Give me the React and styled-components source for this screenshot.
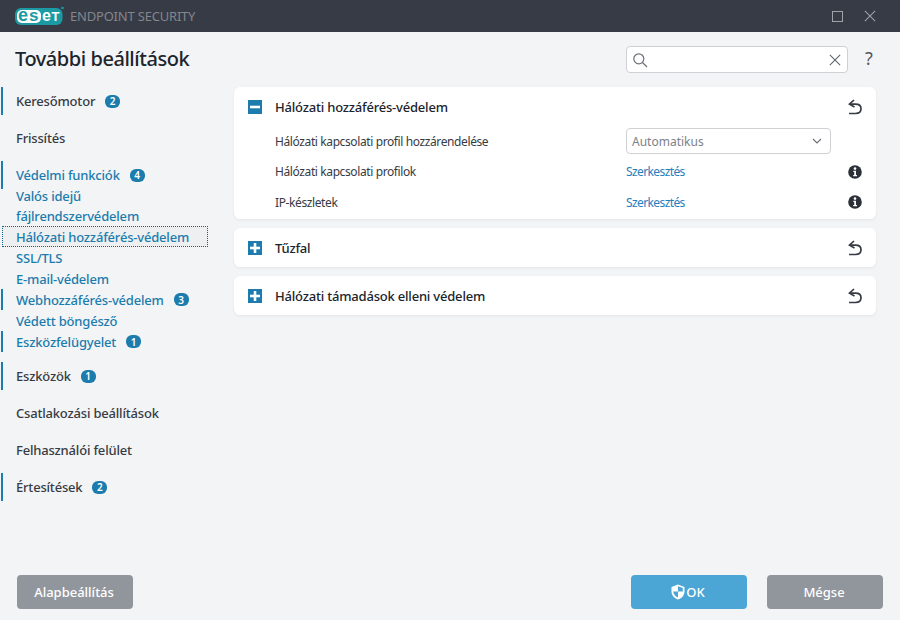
import React from "react";
import styled, { createGlobalStyle } from "styled-components";

const Global = createGlobalStyle`
  html, body { margin: 0; padding: 0; background: #f3f4f6; }
  * { box-sizing: border-box; }
`;

const Page = styled.div`
  display: flex;
  flex-direction: column;
  width: 900px;
  height: 620px;
  overflow: hidden;
  background: #f3f4f6;
  font-family: "Noto Sans", "Open Sans", sans-serif;
  color: #373b44;
`;

const TitleBar = styled.div`
  display: flex;
  align-items: center;
  height: 32px;
  padding-left: 15px;
  background: #373b45;
`;

const Product = styled.span`
  margin-left: 5px;
  font-size: 13px;
  letter-spacing: -0.2px;
  color: #83868e;
`;

const WinButton = styled.button`
  display: flex;
  align-items: center;
  justify-content: center;
  width: 32px;
  height: 32px;
  padding: 0;
  border: 0;
  background: none;
  margin-left: ${(p) => p.$left || 0}px;
`;

const WinControls = styled.div`
  display: flex;
  margin-left: auto;
  margin-right: 14px;
`;

const Header = styled.div`
  display: flex;
  align-items: center;
  height: 55px;
  padding: 0 21px 0 15px;
`;

const Title = styled.h1`
  margin: 0;
  padding-bottom: 2px;
  font-size: 20px;
  font-weight: 500;
  letter-spacing: -0.45px;
  color: #20242c;
`;

const Search = styled.div`
  display: flex;
  align-items: center;
  justify-content: space-between;
  width: 222px;
  height: 27px;
  margin-left: auto;
  padding: 0 6px 0 5px;
  background: #fff;
  border: 1px solid #cfd0d3;
  border-radius: 4px;
`;

const Help = styled.span`
  width: 20px;
  margin-left: 11px;
  padding-bottom: 3px;
  text-align: center;
  font-size: 18px;
  color: #555a63;
`;

const Body = styled.div`
  display: flex;
  flex: 1;
`;

const Sidebar = styled.nav`
  display: flex;
  flex-direction: column;
  width: 234px;
  padding-left: 1px;
  font-size: 13px;
  letter-spacing: -0.19px;
`;

const TopItem = styled.div`
  display: flex;
  align-items: center;
  height: 28px;
  margin-bottom: 9px;
  padding-left: 13px;
  font-weight: 500;
  color: ${(p) => (p.$active ? "#1b7cad" : "#373b44")};
  border-left: 2px solid ${(p) => (p.$bar ? "#1b7cad" : "transparent")};
`;

const SubList = styled.div`
  display: flex;
  flex-direction: column;
  margin-top: -12px;
  margin-bottom: 10px;
`;

const SubItem = styled.div`
  display: flex;
  align-items: center;
  width: 207px;
  min-height: 21px;
  padding-left: 13px;
  font-weight: 500;
  line-height: 20px;
  color: #1b7cad;
  border-left: 2px solid ${(p) => (p.$bar ? "#1b7cad" : "transparent")};
  ${(p) =>
    p.$selected &&
    `
    width: 206px;
    margin-left: 1px;
    padding-left: 12px;
    background: #eeeff1;
    outline: 1px dotted #14608a;
    outline-offset: -1px;
    border-left: 2px solid transparent;
  `}
`;

const Badge = styled.span`
  display: inline-flex;
  align-items: center;
  justify-content: center;
  width: 15px;
  height: 13px;
  margin-left: 10px;
  border-radius: 6px;
  background: #1b7cad;
  color: #fff;
  font-size: 10px;
  font-weight: 600;
  letter-spacing: 0;
`;

const Content = styled.div`
  display: flex;
  flex-direction: column;
  gap: 9px;
  width: 642px;
`;

const Card = styled.section`
  background: #fff;
  border-radius: 6px;
  box-shadow: 0 1px 3px rgba(40, 44, 54, 0.07);
`;

const CardHead = styled.div`
  display: flex;
  align-items: center;
  height: 39px;
  padding: 0 14px;
`;

const CardTitle = styled.span`
  margin-left: 13px;
  font-size: 13px;
  font-weight: 500;
  letter-spacing: -0.2px;
  color: #20242c;
`;

const Toggle = styled.span`
  display: flex;
  align-items: center;
  justify-content: center;
  width: 14px;
  height: 14px;
  background: #1b7cad;
`;

const Reset = styled.span`
  display: flex;
  margin-left: auto;
`;

const Rows = styled.div`
  display: flex;
  flex-direction: column;
  padding-bottom: 1.5px;
`;

const Row = styled.div`
  display: grid;
  grid-template-columns: 351px 1fr 16px;
  align-items: center;
  height: 30.5px;
  padding: 0 12px 0 41px;
  font-size: 12px;
  letter-spacing: -0.39px;
  color: #373b44;
`;

const LinkText = styled.a`
  color: #1f80bd;
  font-size: 12px;
  letter-spacing: -0.6px;
`;

const Select = styled.div`
  display: flex;
  align-items: center;
  justify-content: space-between;
  width: 205px;
  height: 26px;
  padding: 0 8px 0 5px;
  border: 1px solid #cfd0d3;
  border-radius: 4px;
  letter-spacing: 0;
  color: #7d8189;
`;

const Footer = styled.div`
  display: flex;
  gap: 20px;
  padding: 0 17px 11px;
`;

const Button = styled.button`
  display: flex;
  align-items: center;
  justify-content: center;
  gap: 1px;
  width: 116px;
  height: 34px;
  padding: 0 2px 0 0;
  border: 0;
  border-radius: 4px;
  background: ${(p) => (p.$primary ? "#4ba6d5" : "#91969d")};
  color: #fff;
  font-family: inherit;
  font-size: 13px;
  font-weight: 500;
  margin-right: ${(p) => (p.$push ? "auto" : "0")};
`;

const LogoText = styled.text`
  font-family: "Liberation Sans", sans-serif;
  font-size: ${(p) => p.$size || 18}px;
  font-weight: 700;
`;

const Logo = () => (
  <svg width="50" height="20" viewBox="0 0 50 20">
    <rect x="0" y="2" width="47.500" height="17" rx="6" fill="#1c9aa3" />
    <rect x="2" y="4" width="24" height="13" rx="5" fill="#fff" />
    <LogoText x="3" y="15" fill="#1c9aa3">e</LogoText>
    <LogoText x="14" y="15" fill="#1c9aa3" $size={17}>s</LogoText>
    <LogoText x="27" y="15" fill="#fff" $size={16}>e</LogoText>
    <LogoText x="36.500" y="15" fill="#fff" $size={13}>T</LogoText>
    <circle cx="47.500" cy="2" r="1.300" fill="#1c9aa3" />
  </svg>
);

const Cross = ({ size = 14, color = "#a0a3a9" }) => (
  <svg width={size} height={size} viewBox="0 0 14 14" fill="none" stroke={color} strokeWidth="1.2">
    <path d="M1 1l12 12M13 1L1 13" />
  </svg>
);

const Undo = () => (
  <svg width="14" height="16" viewBox="0 0 14 16" fill="none" stroke="#373b44" strokeWidth="1.7">
    <path d="M6 1L1.500 5.200 6.500 8" />
    <path d="M1.500 5.200H7.500C10.800 5.200 13 7 13 9.800S10.800 14.500 7.500 14.500H1" />
  </svg>
);

const Info = () => (
  <svg width="14" height="14" viewBox="0 0 14 14">
    <circle cx="7" cy="7" r="6.800" fill="#2c3038" />
    <circle cx="7" cy="3.600" r="1.300" fill="#fff" />
    <path d="M5.300 5.800H8v4.100h1v1.300H5.200V9.900h1V7.100h-.9z" fill="#fff" />
  </svg>
);

const Sign = ({ plus }) => (
  <svg width="10" height="10" viewBox="0 0 10 10" fill="#fff">
    <rect x="0" y="3.700" width="10" height="2.600" />
    {plus && <rect x="3.700" y="0" width="2.600" height="10" />}
  </svg>
);

const Shield = () => (
  <svg width="14" height="16" viewBox="0 0 14 16">
    <path d="M7 .5L13.500 3v4.500c0 3.800-2.700 6.700-6.500 8C3.200 14.200.5 11.300.5 7.500V3z" fill="#fff" />
    <path d="M7 2.300v5.200H2.200c.1 2.600 2 4.800 4.800 5.900V7.500h4.800V3.900z" fill="#4ba6d5" />
  </svg>
);

const sections = [
  { title: "Tűzfal" },
  { title: "Hálózati támadások elleni védelem" },
];

export default function App() {
  return (
    <Page>
      <Global />
      <TitleBar>
        <Logo />
        <Product>ENDPOINT SECURITY</Product>
        <WinControls>
          <WinButton>
            <svg width="11" height="11" viewBox="0 0 11 11" fill="none" stroke="#a0a3a9">
              <rect x="0.5" y="0.5" width="10" height="10" />
            </svg>
          </WinButton>
          <WinButton $left={1}>
            <Cross size={12} />
          </WinButton>
        </WinControls>
      </TitleBar>

      <Header>
        <Title>További beállítások</Title>
        <Search>
          <svg width="16" height="16" viewBox="0 0 16 16" fill="none" stroke="#6b6f77" strokeWidth="1.2">
            <circle cx="6.800" cy="6.800" r="5" />
            <path d="M10.500 10.500l4.500 4.500" />
          </svg>
          <Cross size={12} color="#5d6169" />
        </Search>
        <Help>?</Help>
      </Header>

      <Body>
        <Sidebar>
          <TopItem $bar>Keresőmotor<Badge>2</Badge></TopItem>
          <TopItem>Frissítés</TopItem>
          <TopItem $bar $active>Védelmi funkciók<Badge>4</Badge></TopItem>
          <SubList>
            <SubItem>Valós idejű<br />fájlrendszervédelem</SubItem>
            <SubItem $selected>Hálózati hozzáférés-védelem</SubItem>
            <SubItem>SSL/TLS</SubItem>
            <SubItem>E-mail-védelem</SubItem>
            <SubItem $bar>Webhozzáférés-védelem<Badge>3</Badge></SubItem>
            <SubItem>Védett böngésző</SubItem>
            <SubItem $bar>Eszközfelügyelet<Badge>1</Badge></SubItem>
          </SubList>
          <TopItem $bar>Eszközök<Badge>1</Badge></TopItem>
          <TopItem>Csatlakozási beállítások</TopItem>
          <TopItem>Felhasználói felület</TopItem>
          <TopItem $bar>Értesítések<Badge>2</Badge></TopItem>
        </Sidebar>

        <Content>
          <Card>
            <CardHead>
              <Toggle><Sign /></Toggle>
              <CardTitle>Hálózati hozzáférés-védelem</CardTitle>
              <Reset><Undo /></Reset>
            </CardHead>
            <Rows>
              <Row>
                Hálózati kapcsolati profil hozzárendelése
                <Select>
                  Automatikus
                  <svg width="10" height="6" viewBox="0 0 10 6" fill="none" stroke="#6b6f77" strokeWidth="1.1">
                    <path d="M1 1l4 4 4-4" />
                  </svg>
                </Select>
              </Row>
              <Row>
                Hálózati kapcsolati profilok
                <LinkText>Szerkesztés</LinkText>
                <Info />
              </Row>
              <Row>
                IP-készletek
                <LinkText>Szerkesztés</LinkText>
                <Info />
              </Row>
            </Rows>
          </Card>
          {sections.map((s) => (
            <Card key={s.title}>
              <CardHead>
                <Toggle><Sign plus /></Toggle>
                <CardTitle>{s.title}</CardTitle>
                <Reset><Undo /></Reset>
              </CardHead>
            </Card>
          ))}
        </Content>
      </Body>

      <Footer>
        <Button $push>Alapbeállítás</Button>
        <Button $primary><Shield />OK</Button>
        <Button>Mégse</Button>
      </Footer>
    </Page>
  );
}
